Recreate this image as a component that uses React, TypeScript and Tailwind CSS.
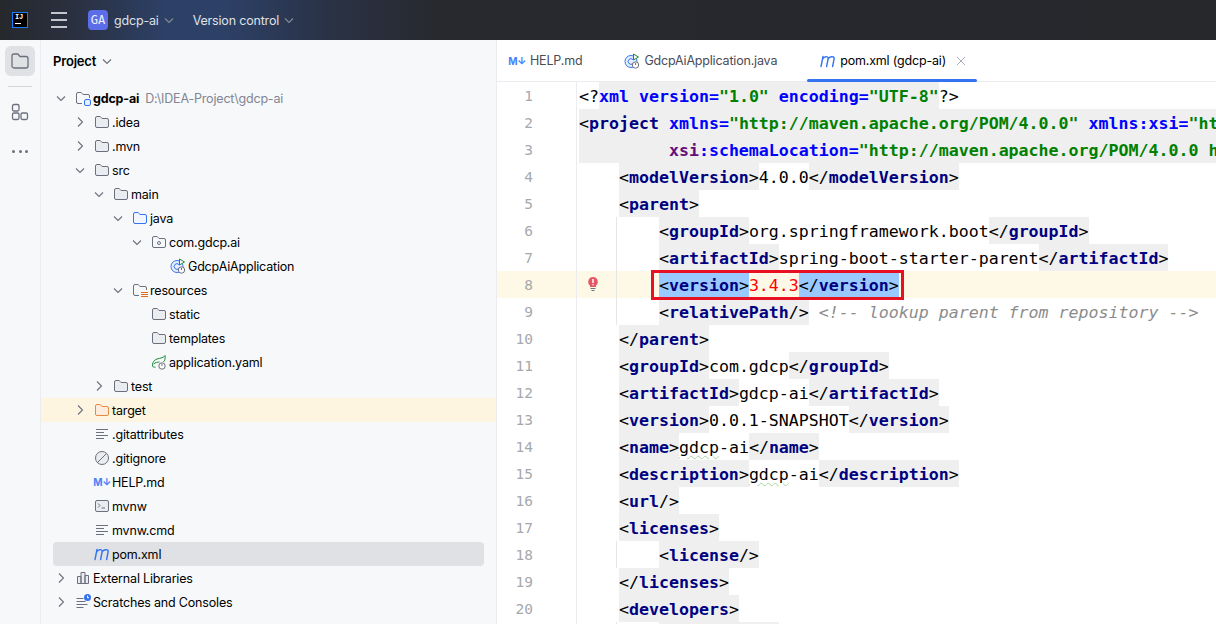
import type { ReactNode } from 'react';

const STROKE = '#6c707e';
const FILL = '#ebecf0';

function ChevronDown({ color = STROKE }: { color?: string }) {
  return (
    <svg width="16" height="16" viewBox="0 0 16 16" fill="none">
      <path d="M4 6.5 8 10.5 12 6.5" stroke={color} strokeWidth="1.1" />
    </svg>
  );
}

function ChevronRight() {
  return (
    <svg width="16" height="16" viewBox="0 0 16 16" fill="none">
      <path d="M6 3.5 10.5 8 6 12.5" stroke={STROKE} strokeWidth="1.1" />
    </svg>
  );
}

function Folder({ stroke = STROKE, fill = FILL, children }: { stroke?: string; fill?: string; children?: ReactNode }) {
  return (
    <svg width="16" height="16" viewBox="0 0 16 16" fill="none">
      <path
        d="M1.5 4A1.5 1.5 0 0 1 3 2.5h3.2l1.8 2h5A1.5 1.5 0 0 1 14.5 6v6a1.5 1.5 0 0 1-1.5 1.5H3A1.5 1.5 0 0 1 1.5 12z"
        fill={fill}
        stroke={stroke}
      />
      {children}
    </svg>
  );
}

function ModuleFolder() {
  return (
    <svg width="16" height="16" viewBox="0 0 16 16" fill="none">
      <path d="M7 13.5H3A1.5 1.5 0 0 1 1.5 12V4A1.5 1.5 0 0 1 3 2.5h3.2l1.8 2h5A1.5 1.5 0 0 1 14.5 6v2" stroke={STROKE} />
      <rect x="9.5" y="9.5" width="6" height="6" rx="1.5" fill="#e7effd" stroke="#3574f0" />
    </svg>
  );
}

function ResourceFolder() {
  return (
    <svg width="16" height="16" viewBox="0 0 16 16" fill="none">
      <path d="M7 13.5H3A1.5 1.5 0 0 1 1.5 12V4A1.5 1.5 0 0 1 3 2.5h3.2l1.8 2h5A1.5 1.5 0 0 1 14.5 6v2" stroke={STROKE} />
      <path d="M9 10.5h7M9 12.5h7M9 14.5h7" stroke="#e66d17" />
    </svg>
  );
}

function PackageFolder() {
  return (
    <Folder fill="#f7f8fa">
      <circle cx="8" cy="9" r="1.5" stroke={STROKE} />
    </Folder>
  );
}

function TextLines() {
  return (
    <svg width="16" height="16" viewBox="0 0 16 16" fill="none">
      <path d="M2 3.5h12M2 6.5h8M2 9.5h12M2 12.5h8" stroke={STROKE} />
    </svg>
  );
}

function IgnoreIcon() {
  return (
    <svg width="16" height="16" viewBox="0 0 16 16" fill="none">
      <circle cx="8" cy="8" r="6.5" fill={FILL} stroke={STROKE} />
      <path d="M3.5 12.5 12.5 3.5" stroke={STROKE} />
    </svg>
  );
}

function ScriptIcon() {
  return (
    <svg width="16" height="16" viewBox="0 0 16 16" fill="none">
      <rect x="1.5" y="2.5" width="13" height="11" rx="1.5" fill={FILL} stroke={STROKE} />
      <path d="M4 5.5 6 7.5 4 9.5M7.5 10h3.5" stroke={STROKE} />
    </svg>
  );
}

function MavenIcon({ color = '#3574f0' }: { color?: string }) {
  return (
    <svg width="16" height="16" viewBox="0 0 16 16" fill="none">
      <path
        d="M1 13.5 3 3.500M2.700 6C3.800 3.500 8 2.500 8.200 5.500L6.600 13.500M7.800 6.500C9 3.500 14 2.500 14.200 5.500L12.600 13.500"
        stroke={color}
        strokeWidth="1.4"
        strokeLinecap="round"
      />
    </svg>
  );
}

function MarkdownIcon() {
  return (
    <span className="flex w-4 items-center justify-center text-[10px] font-bold leading-none tracking-[-0.5px] text-[#4682fa]">
      M↓
    </span>
  );
}

function RunnableClassIcon() {
  return (
    <svg width="16" height="16" viewBox="0 0 16 16" fill="none">
      <circle cx="7" cy="8.5" r="6" fill="#e7effd" stroke="#3574f0" />
      <path d="M9 6.6A2.8 2.8 0 1 0 9 10.4" stroke="#3574f0" />
      <path d="M9.5 1v6l5-3z" fill="#f2fcf3" stroke="#208a3c" />
      <circle cx="11.5" cy="12" r="3.2" fill="#fff" stroke={STROKE} />
      <path d="M11.5 9.8v2.2" stroke={STROKE} />
    </svg>
  );
}

function SpringConfigIcon() {
  return (
    <svg width="16" height="16" viewBox="0 0 16 16" fill="none">
      <path d="M14 1.5C13 4 9 4 6 5S1 9 1.5 12c.2 1.200 2 1.500 3 1" stroke="#208a3c" />
      <path d="M14 1.500c.5 2.500 0 5-1.500 6.500M2.500 10c2-1.500 4-2 6-2" stroke="#208a3c" />
      <circle cx="11" cy="12" r="3.2" fill="#fff" stroke={STROKE} />
      <path d="M11 9.800V12" stroke={STROKE} />
    </svg>
  );
}

function LibrariesIcon() {
  return (
    <svg width="16" height="16" viewBox="0 0 16 16" fill="none">
      <path d="M2.500 6.500h3.500v7H2.500zM6 2.500h4v11H6zM10 5.500h3.500v8H10z" fill={FILL} stroke={STROKE} />
    </svg>
  );
}

function ScratchesIcon() {
  return (
    <svg width="16" height="16" viewBox="0 0 16 16" fill="none">
      <path d="M1.500 4.500h7M1.500 7.500h9M1.500 10.500h11M1.500 13.500h7" stroke={STROKE} />
      <circle cx="12.500" cy="3.500" r="3.500" fill="#3574f0" />
      <path d="M12.500 1.700v2h1.500" stroke="#fff" />
    </svg>
  );
}

type TreeRow = {
  level: number;
  name: string;
  icon: ReactNode;
  arrow?: 'open' | 'closed';
  bold?: boolean;
  hint?: string;
  band?: boolean;
  selected?: boolean;
};

const tree: TreeRow[] = [
  { level: 0, name: 'gdcp-ai', icon: <ModuleFolder />, arrow: 'open', bold: true, hint: 'D:\\IDEA-Project\\gdcp-ai' },
  { level: 1, name: '.idea', icon: <Folder />, arrow: 'closed' },
  { level: 1, name: '.mvn', icon: <Folder />, arrow: 'closed' },
  { level: 1, name: 'src', icon: <Folder />, arrow: 'open' },
  { level: 2, name: 'main', icon: <Folder />, arrow: 'open' },
  { level: 3, name: 'java', icon: <Folder stroke="#3574f0" fill="#f0f5ff" />, arrow: 'open' },
  { level: 4, name: 'com.gdcp.ai', icon: <PackageFolder />, arrow: 'open' },
  { level: 5, name: 'GdcpAiApplication', icon: <RunnableClassIcon /> },
  { level: 3, name: 'resources', icon: <ResourceFolder />, arrow: 'open' },
  { level: 4, name: 'static', icon: <Folder /> },
  { level: 4, name: 'templates', icon: <Folder /> },
  { level: 4, name: 'application.yaml', icon: <SpringConfigIcon /> },
  { level: 2, name: 'test', icon: <Folder />, arrow: 'closed' },
  { level: 1, name: 'target', icon: <Folder stroke="#e68a43" fill="#ffecdc" />, arrow: 'closed', band: true },
  { level: 1, name: '.gitattributes', icon: <TextLines /> },
  { level: 1, name: '.gitignore', icon: <IgnoreIcon /> },
  { level: 1, name: 'HELP.md', icon: <MarkdownIcon /> },
  { level: 1, name: 'mvnw', icon: <ScriptIcon /> },
  { level: 1, name: 'mvnw.cmd', icon: <TextLines /> },
  { level: 1, name: 'pom.xml', icon: <MavenIcon />, selected: true },
  { level: 0, name: 'External Libraries', icon: <LibrariesIcon />, arrow: 'closed' },
  { level: 0, name: 'Scratches and Consoles', icon: <ScratchesIcon />, arrow: 'closed' },
];

// tokens for the xml view
type Token = { t: string; k?: 'br' | 'tag' | 'attr' | 'ns' | 'val' | 'txt' | 'com' | 'err'; plain?: boolean; sel?: boolean; wavy?: boolean };

const tokenColor: Record<string, string> = {
  br: 'text-[#000000]',
  tag: 'text-[#000080] font-bold',
  attr: 'text-[#0000ff] font-bold',
  ns: 'text-[#660e7a] font-bold',
  val: 'text-[#008000] font-bold',
  txt: 'text-[#000000]',
  com: 'text-[#8c8c8c] italic',
  err: 'text-[#ff0000]',
};

const open = (name: string): Token[] => [{ t: '<', k: 'br' }, { t: name, k: 'tag' }, { t: '>', k: 'br' }];
const close = (name: string): Token[] => [{ t: '</', k: 'br' }, { t: name, k: 'tag' }, { t: '>', k: 'br' }];
const empty = (name: string): Token[] => [{ t: '<', k: 'br' }, { t: name, k: 'tag' }, { t: '/>', k: 'br' }];
const el = (name: string, value: string, wavy = false): Token[] => [
  ...open(name),
  { t: value, k: 'txt', plain: true, wavy },
  ...close(name),
];
const pad = (n: number): Token => ({ t: ' '.repeat(n), plain: true });

const code: Token[][] = [
  [
    { t: '<?', k: 'br', plain: true },
    { t: 'xml', k: 'attr' },
    { t: ' ', k: 'br' },
    { t: 'version', k: 'attr' },
    { t: '=', k: 'attr' },
    { t: '"1.0"', k: 'val' },
    { t: ' ', k: 'br' },
    { t: 'encoding', k: 'attr' },
    { t: '=', k: 'attr' },
    { t: '"UTF-8"', k: 'val' },
    { t: '?>', k: 'br', plain: true },
  ],
  [
    { t: '<', k: 'br' },
    { t: 'project', k: 'tag' },
    { t: ' ', k: 'br' },
    { t: 'xmlns', k: 'attr' },
    { t: '=', k: 'attr' },
    { t: '"http://maven.apache.org/POM/4.0.0"', k: 'val' },
    { t: ' ', k: 'br' },
    { t: 'xmlns:xsi', k: 'attr' },
    { t: '=', k: 'attr' },
    { t: '"http://www.w3.org/2001/XMLSchema-instance"', k: 'val' },
  ],
  [
    { t: '         ', k: 'br' },
    { t: 'xsi', k: 'ns' },
    { t: ':schemaLocation', k: 'attr' },
    { t: '=', k: 'attr' },
    { t: '"http://maven.apache.org/POM/4.0.0 https://maven.apache.org/xsd/maven-4.0.0.xsd"', k: 'val' },
  ],
  [pad(4), ...el('modelVersion', '4.0.0')],
  [pad(4), ...open('parent')],
  [pad(8), ...el('groupId', 'org.springframework.boot')],
  [pad(8), ...el('artifactId', 'spring-boot-starter-parent')],
  [
    pad(8),
    { t: '<', k: 'br', sel: true },
    { t: 'version', k: 'tag', sel: true },
    { t: '>', k: 'br', sel: true },
    { t: '3.4.3', k: 'err', plain: true },
    { t: '</', k: 'br', sel: true },
    { t: 'version', k: 'tag', sel: true },
    { t: '>', k: 'br', sel: true },
  ],
  [pad(8), ...empty('relativePath'), { t: ' <!-- lookup parent from repository -->', k: 'com', plain: true }],
  [pad(4), ...close('parent')],
  [pad(4), ...el('groupId', 'com.gdcp')],
  [pad(4), ...el('artifactId', 'gdcp-ai')],
  [pad(4), ...el('version', '0.0.1-SNAPSHOT')],
  [pad(4), ...el('name', 'gdcp-ai', true)],
  [pad(4), ...el('description', 'gdcp-ai', true)],
  [pad(4), ...empty('url')],
  [pad(4), ...open('licenses')],
  [pad(8), ...empty('license')],
  [pad(4), ...close('licenses')],
  [pad(4), ...open('developers')],
  [pad(8), ...open('developer'), { t: ' ', k: 'br' }],
];

const guided = new Set([6, 7, 8, 9, 18, 21]);

function TokenSpan({ token }: { token: Token }) {
  if (token.wavy) {
    // only the gdcp word carries the spell-check squiggle
    return (
      <span className="inline-block h-[27px] text-[#000000]">
        <span className="underline decoration-[#a9d3a0] decoration-wavy decoration-1 underline-offset-2">gdcp</span>-ai
      </span>
    );
  }
  const bg = token.sel ? 'bg-[#99c9ff]' : token.plain ? '' : 'bg-[#efefef]';
  return <span className={`inline-block h-[27px] ${bg} ${token.k ? tokenColor[token.k] : ''}`}>{token.t}</span>;
}

function CodeLine({ n, tokens }: { n: number; tokens: Token[] }) {
  const current = n === 8;
  const fullBand = n === 2 || n === 3;
  return (
    <div className={`flex h-[27px] shrink-0 tracking-normal ${current ? 'bg-[#fef9e6]' : ''}`}>
      <div className="w-[36px] shrink-0 text-right font-['DejaVu_Sans_Mono',monospace] text-[14.5px] leading-[29px] text-[#a6a8ad]">{n}</div>
      <div className="w-[44px] shrink-0 border-r border-[#ebecf0]" />
      <div
        className={`relative ml-[2px] min-w-0 flex-1 overflow-hidden whitespace-pre font-['DejaVu_Sans_Mono',monospace] text-[16.6px] leading-[29px] ${
          fullBand ? 'bg-[#efefef]' : ''
        }`}
      >
        {guided.has(n) && <span className="absolute left-[37px] top-0 h-full w-px bg-[#e6e6e6]" />}
        {tokens.map((token, i) => (
          <TokenSpan key={i} token={token} />
        ))}
        {current && (
          <svg className="absolute left-[7px] top-[5px]" width="14" height="16" viewBox="0 0 14 16" fill="none">
            <path d="M7 1a4.800 4.800 0 0 0-3 8.500V11h6V9.500A4.800 4.800 0 0 0 7 1z" fill="#e55765" />
            <path d="M7 3v4M7 8.200v1" stroke="#fff" strokeWidth="1.500" />
            <path d="M4.500 12.500h5M5.500 14.500h3" stroke="#6c707e" />
          </svg>
        )}
      </div>
    </div>
  );
}

function Tab({ icon, label, active, first }: { icon: ReactNode; label: string; active?: boolean; first?: boolean }) {
  return (
    <div className={`relative flex h-full items-center ${active ? 'pl-[13px] pr-2' : 'pl-3 pr-[7px]'}`}>
      <span className={`flex w-4 items-center justify-center ${first ? 'mr-[5px]' : 'mr-1'}`}>{icon}</span>
      <span className={`pt-[2px] ${active ? 'text-[#000000]' : 'text-[#494b57]'}`}>{label}</span>
      <span className="ml-[7px] flex w-4 items-center justify-center">
        {active && (
          <svg width="10" height="10" viewBox="0 0 10 10" fill="none">
            <path d="M1 1 9 9M9 1 1 9" stroke="#a8adbd" />
          </svg>
        )}
      </span>
      {active && <span className="absolute inset-x-0 bottom-[-1px] h-[3px] rounded-full bg-[#3574f0]" />}
    </div>
  );
}

export default function App() {
  return (
    <div className="flex h-[624px] w-[1216px] flex-col overflow-hidden bg-white font-['Inter',sans-serif] text-[12.5px] tracking-[-0.18px] text-[#000000]">
      {/* title bar */}
      <header className="flex h-10 shrink-0 items-center bg-[linear-gradient(90deg,#26282c_0%,#2a3040_6%,#2d4168_14%,#2d4168_18%,#2a3245_27%,#27292e_36%,#26282c_100%)]">
        <div className="ml-3 flex h-4 w-4 flex-col border border-[#1a7cff] bg-black">
          <span className="pl-[2px] font-['Liberation_Mono',monospace] text-[7px] font-bold leading-[8px] text-white">IJ</span>
          <span className="ml-[2px] mt-[2px] h-px w-[6px] bg-white" />
        </div>
        <div className="ml-[23px] flex w-4 flex-col gap-[5px]">
          <span className="h-0.5 bg-[#c4c6cc]" />
          <span className="h-0.5 bg-[#c4c6cc]" />
          <span className="h-0.5 bg-[#c4c6cc]" />
        </div>
        <div className="ml-[21px] flex h-5 w-5 items-center justify-center rounded bg-[#5b6de8] font-['DejaVu_Sans_Mono',monospace] text-[12px] tracking-normal text-[#f0f1ff]">
          GA
        </div>
        <span className="ml-1.5 pt-[2px] text-[#dfe1e5]">gdcp-ai</span>
        <span className="ml-[2px]">
          <ChevronDown color="#868a91" />
        </span>
        <span className="ml-[16px] pt-[2px] text-[#dfe1e5]">Version control</span>
        <span className="ml-[2px]">
          <ChevronDown color="#868a91" />
        </span>
      </header>

      <div className="flex min-h-0 flex-1">
        {/* tool strip */}
        <aside className="flex w-[41px] shrink-0 flex-col items-center border-r border-[#ebecf0] bg-[#f7f8fa] pt-1.5">
          <div className="flex h-[30px] w-[30px] items-center justify-center rounded-md bg-[#dfe1e5]">
            <svg width="20" height="20" viewBox="0 0 20 20" fill="none">
              <path d="M2 5A2 2 0 0 1 4 3h3.800l2.200 2.500h6A2 2 0 0 1 18 7.500V15a2 2 0 0 1-2 2H4a2 2 0 0 1-2-2z" stroke={STROKE} strokeWidth="1.300" />
            </svg>
          </div>
          <div className="mt-[10px] h-px w-6 bg-[#d3d5db]" />
          <div className="mt-[15px]">
            <svg width="20" height="20" viewBox="0 0 20 20" fill="none" stroke={STROKE} strokeWidth="1.300">
              <rect x="2.500" y="2.500" width="6.500" height="6.500" rx="1.500" />
              <rect x="2.500" y="11" width="6.500" height="6.500" rx="1.500" />
              <rect x="11" y="11" width="6.500" height="6.500" rx="1.500" />
            </svg>
          </div>
          <div className="mt-7 flex gap-[3.500px]">
            <span className="h-[3px] w-[3px] rounded-full bg-[#6c707e]" />
            <span className="h-[3px] w-[3px] rounded-full bg-[#6c707e]" />
            <span className="h-[3px] w-[3px] rounded-full bg-[#6c707e]" />
          </div>
        </aside>

        {/* project panel */}
        <section className="flex w-[456px] shrink-0 flex-col border-r border-[#ebecf0] bg-[#f7f8fa]">
          <div className="flex h-[42px] shrink-0 items-center pl-3">
            <span className="pt-[2px] text-[13px] font-semibold">Project</span>
            <span className="ml-[3px]">
              <ChevronDown />
            </span>
          </div>
          <div className="pt-1">
            {tree.map((row) => (
              <div key={`${row.level}-${row.name}`} className={row.band ? 'bg-[#fdf5e0]' : ''}>
                <div
                  className={`mx-3 flex h-6 items-center rounded ${row.selected ? 'bg-[#dfe1e5]' : ''}`}
                  style={{ paddingLeft: row.level * 19 }}
                >
                  <span className="w-4 shrink-0">
                    {row.arrow === 'open' && <ChevronDown />}
                    {row.arrow === 'closed' && <ChevronRight />}
                  </span>
                  <span className="ml-1.5 flex w-4 shrink-0 items-center justify-center">{row.icon}</span>
                  <span className={`ml-0.5 pt-[2px] ${row.bold ? 'font-bold' : ''}`}>{row.name}</span>
                  {row.hint && <span className="ml-[6px] pt-[2px] text-[#818594]">{row.hint}</span>}
                </div>
              </div>
            ))}
          </div>
        </section>

        {/* editor */}
        <main className="flex min-w-0 flex-1 flex-col bg-white">
          <div className="flex h-[42px] shrink-0 border-b border-[#ebecf0]">
            <Tab first icon={<MarkdownIcon />} label="HELP.md" />
            <Tab icon={<RunnableClassIcon />} label="GdcpAiApplication.java" />
            <Tab active icon={<MavenIcon />} label="pom.xml (gdcp-ai)" />
          </div>
          <div className="relative flex min-h-0 flex-1 flex-col overflow-hidden">
            {code.map((tokens, i) => (
              <CodeLine key={i} n={i + 1} tokens={tokens} />
            ))}
            {/* red annotation box drawn over line 8 */}
            <div className="pointer-events-none absolute left-[154px] top-[188px] h-[30px] w-[253px] border-[3px] border-[#e81123]" />
          </div>
        </main>
      </div>
    </div>
  );
}
